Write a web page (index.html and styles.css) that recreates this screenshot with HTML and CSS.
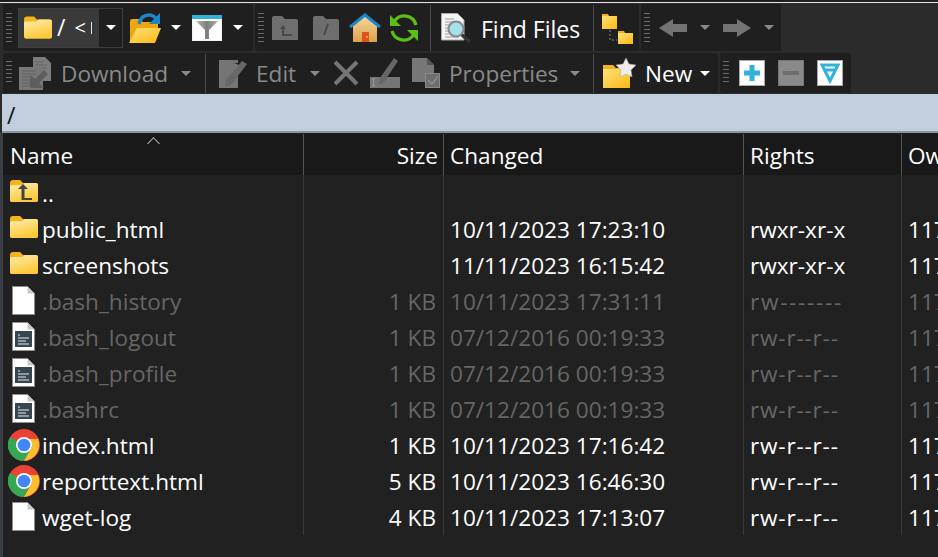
FILE: index.html
```html
<!DOCTYPE html>
<html lang="en">
<head>
<meta charset="utf-8">
<title>Files</title>
<link rel="stylesheet" href="styles.css">
</head>
<body>
<svg class="defs" aria-hidden="true">
<defs>
<linearGradient id="gy" x1="0" y1="0" x2="0.4" y2="1"><stop offset="0" stop-color="#ffeeb0"/><stop offset="1" stop-color="#fdc93a"/></linearGradient>
<linearGradient id="gy2" x1="0" y1="0" x2="1" y2="1"><stop offset="0" stop-color="#ffe27a"/><stop offset="1" stop-color="#fdb812"/></linearGradient>
<linearGradient id="gh" x1="0" y1="0" x2="0" y2="1"><stop offset="0" stop-color="#f5d9a0"/><stop offset="1" stop-color="#dba24c"/></linearGradient>
<linearGradient id="gf" x1="0" y1="0" x2="1" y2="0"><stop offset="0" stop-color="#b8b8b8"/><stop offset=".5" stop-color="#7d7d7d"/><stop offset="1" stop-color="#b0b0b0"/></linearGradient>
<symbol id="folder" viewBox="0 0 28 22"><path d="M0 3q0-3 3-3h7l3 3h12q3 0 3 2v15q0 2-2 2H2q-2 0-2-2z" fill="#f6b41c"/><path d="M0 7q0-2 2-2h10l3-2h11q2 0 2 2v15q0 2-2 2H2q-2 0-2-2z" fill="url(#gy)"/></symbol>
<symbol id="file" viewBox="0 0 23 29"><path d="M.5.5h15l7 7v21H.5z" fill="#fff" stroke="#8f8f8f"/><path d="M15.5.5v7h7z" fill="#c9c9c9"/></symbol>
<symbol id="script" viewBox="0 0 23 29"><path d="M.5.5h15l7 7v21H.5z" fill="#fff" stroke="#8f8f8f"/><path d="M15.5.5v7h7z" fill="#c9c9c9"/><rect x="3" y="9" width="17" height="16" fill="#36474f"/><path d="M6 13h2M6 16h11M6 19h8M6 22h11" stroke="#e8eef0" stroke-width="1.2"/></symbol>
<symbol id="chrome" viewBox="0 0 32 32"><circle cx="16" cy="16" r="16" fill="#ea4335"/><path d="M16 16L2.1 8A16 16 0 0 0 16 32l8-13.900z" fill="#34a853"/><path d="M16 10h14a16 16 0 0 1-14 22l8-13.900z" fill="#fbc02d"/><circle cx="16" cy="16" r="8" fill="#fff"/><circle cx="16" cy="16" r="6.300" fill="#4285f4"/></symbol>
</defs>
</svg>
<div class="app">
  <div class="topline"></div>
  <div class="tbrow first">
    <div class="tb tb-a">
      <span class="grip"></span>
      <div class="combo">
        <div class="combo-field">
          <svg class="ic-folder-lg"><use href="#folder"/></svg>
          <span class="combo-text">/</span>
          <span class="combo-text2">&lt;</span><span class="combo-bar"></span>
        </div>
        <span class="caret"></span>
      </div>
      <svg class="i-open" viewBox="0 0 32 30"><path d="M1 8q0-2 2-2h8l3 3h13q2 0 2 2v4L7 30H1z" fill="#eea80f"/><path d="M8 15h24l-6 15H0z" fill="url(#gy2)"/><path d="M10 11Q12 2 20 2q5 0 8 5" fill="none" stroke="#1c86c8" stroke-width="3.500"/><path d="M31 0v11H20z" fill="#1c86c8"/></svg>
      <span class="caret c-open"></span>
      <svg class="i-filter" viewBox="0 0 30 26"><rect width="30" height="26" fill="#f2f2f2"/><rect x="1" y="1" width="28" height="24" fill="#fff"/><rect width="30" height="4" fill="#2fb2dc"/><path d="M4 6h22l-9 9v9h-4v-9z" fill="url(#gf)"/></svg>
      <span class="caret c-filter"></span>
    </div>
    <div class="tb tb-b">
      <span class="grip"></span>
      <svg class="i-parent" viewBox="0 0 26 24"><path d="M0 2q0-2 2-2h8l3 3h11q2 0 2 2v19H0z" fill="#6e6e6e"/><path d="M8 13l3-4 3 4h-2v5h8v2H10v-7z" fill="#4a4a4a"/></svg>
      <svg class="i-root" viewBox="0 0 26 24"><path d="M0 2q0-2 2-2h8l3 3h11q2 0 2 2v19H0z" fill="#6e6e6e"/><path d="M11 19l4-11" stroke="#4a4a4a" stroke-width="2"/></svg>
      <svg class="i-home" viewBox="0 0 32 29"><path d="M4 12L16 2l12 10v17H4z" fill="url(#gh)"/><path d="M1 14L16 2l15 12" fill="none" stroke="#1c86c8" stroke-width="3"/><rect x="13" y="19" width="7" height="10" fill="#df5518"/><rect x="17.500" y="23" width="1" height="1.500" fill="#fff"/></svg>
      <svg class="i-refresh" viewBox="0 0 30 28"><path d="M5 8A12 12 0 0 1 27 11M25 20A12 12 0 0 1 3 17" fill="none" stroke="#5cbf15" stroke-width="3.200"/><path d="M1 1v11h11zM29 27V16H18z" fill="#5cbf15"/></svg>
      <span class="sep"></span>
      <svg class="i-find" viewBox="0 0 30 30"><path d="M.5.500h16l6.500 6.500v20H.5z" fill="#f4f4f4" stroke="#aaa"/><path d="M4 6h9M4 9h15M4 12h4M4 15h4M4 18h4M4 21h4M4 24h14" stroke="#9a9a9a"/><path d="M20 21l9 8" stroke="#333" stroke-width="3.500"/><circle cx="15" cy="16" r="7.500" fill="#a6e0ec" stroke="#888" stroke-width="2"/></svg>
      <span class="label on l-find">Find Files</span>
      <span class="sep s-tree"></span>
      <svg class="i-tree" viewBox="0 0 31 32"><path d="M0 2h6l1 2h8v13H0z" fill="#f6b41c"/><rect y="4" width="15" height="13" fill="url(#gy2)"/><path d="M8 18v10h7" fill="none" stroke="#666" stroke-width="1.500" stroke-dasharray="2 2"/><path d="M16 19h6l1 2h8v11H16z" fill="#f6b41c"/><rect x="16" y="21" width="15" height="11" fill="url(#gy2)"/></svg>
    </div>
    <div class="tb tb-c">
      <span class="grip"></span>
      <svg class="i-back" viewBox="0 0 28 18"><path d="M0 9L14 0v5h14v8H14v5z" fill="#737373"/></svg>
      <span class="caret dim c-back"></span>
      <svg class="i-fwd" viewBox="0 0 28 18"><path d="M28 9L14 0v5H0v8h14v5z" fill="#737373"/></svg>
      <span class="caret dim c-fwd"></span>
    </div>
  </div>
  <div class="tbrow second">
    <div class="tb tb-d">
      <span class="grip"></span>
      <svg class="i-dl" viewBox="0 0 32 33"><path d="M14 0h12l6 6v18H14z" fill="#7c7c7c"/><path d="M16 5h8M16 8h12M16 11h12" stroke="#666"/><path d="M0 10h22l2 4v19H0z" fill="#777"/><path d="M3 14h14M3 17h14M3 20h10M3 23h10M3 26h10M3 29h14" stroke="#626262"/><path d="M25 13l4 4-9 9 5 5H11V18l5 4z" fill="#5e5e5e"/></svg>
      <span class="label off l-dl">Download</span>
      <span class="caret dim c-dl"></span>
      <span class="sep s-dl"></span>
      <svg class="i-edit" viewBox="0 0 28 29"><path d="M0 1h16l-1 3 5 2L9 24l9-7 1-3v15H0z" fill="#757575"/><path d="M0 1h19v3H0z" fill="#757575"/><path d="M23 2l5 3-16 21-6 2 1-7z" fill="#686868"/></svg>
      <span class="label off l-edit">Edit</span>
      <span class="caret dim c-edit"></span>
      <svg class="i-del" viewBox="0 0 26 26"><path d="M2 2l22 22M24 2L2 24" stroke="#757575" stroke-width="4"/></svg>
      <svg class="i-ren" viewBox="0 0 30 30"><rect y="19" width="30" height="11" fill="#757575"/><path d="M2 21h3M2 28h3M3.500 21v7" stroke="#999" fill="none"/><path d="M24 0l4 3-14 21-5 3 1-7z" fill="#666"/></svg>
      <svg class="i-props" viewBox="0 0 28 30"><path d="M0 0h15l7 7v17H0z" fill="#777"/><path d="M15 0v7h7z" fill="#555"/><rect x="13.500" y="15.500" width="14" height="14" fill="#6e6e6e" stroke="#8a8a8a"/><path d="M16 22l4 4 6-8" fill="none" stroke="#8e8e8e" stroke-width="1.500"/></svg>
      <span class="label off l-props">Properties</span>
      <span class="caret dim c-props"></span>
      <span class="sep s-props"></span>
      <svg class="i-new" viewBox="0 0 33 30"><path d="M0 7h10l3 3h14v20H0z" fill="#f6b41c"/><rect y="11" width="27" height="19" fill="url(#gy2)"/><path d="M23 0l3 6 7 1-5 5 1 7-6-3-6 3 1-7-5-5 7-1z" fill="#eee" stroke="#aaa" stroke-width=".5"/></svg>
      <span class="label on l-new">New</span>
      <span class="caret c-new"></span>
    </div>
    <div class="tb tb-e">
      <span class="grip"></span>
      <svg class="i-box" viewBox="0 0 26 26"><rect x=".5" y=".5" width="25" height="25" fill="#fff" stroke="#aaa"/><path d="M13 5v16M5 13h16" stroke="#2fb2dc" stroke-width="5"/></svg>
      <svg class="i-box b2" viewBox="0 0 26 26"><rect x=".5" y=".5" width="25" height="25" fill="#8a8a8a" stroke="#777"/><path d="M5 13h16" stroke="#6e6e6e" stroke-width="4"/></svg>
      <svg class="i-box b2" viewBox="0 0 26 26"><rect x=".5" y=".5" width="25" height="25" fill="#fff" stroke="#aaa"/><path d="M5 5h16l-8 16z" fill="none" stroke="#2fb2dc" stroke-width="3"/><path d="M8 10h10" stroke="#2fb2dc" stroke-width="3"/></svg>
    </div>
  </div>
  <div class="pathbar">/</div>
  <div class="panel">
    <div class="sortmark"></div>
    <div class="row head">
      <div class="cell c1">Name</div><div class="cell c2">Size</div><div class="cell c3">Changed</div><div class="cell c4">Rights</div><div class="cell c5">Owner</div>
    </div>
    <div class="list">
      <div class="row"><div class="cell c1"><span class="ic"><svg class="i-up" viewBox="0 0 28 22"><use href="#folder"/><path d="M13 4l5 5h-3.500v9H22v2H11.500V9H8z" fill="#444"/></svg></span>..</div><div class="cell c2"></div><div class="cell c3"></div><div class="cell c4"></div><div class="cell c5"></div></div>
      <div class="row"><div class="cell c1"><span class="ic"><svg class="i-fold"><use href="#folder"/></svg></span>public_html</div><div class="cell c2"></div><div class="cell c3">10/11/2023 17:23:10</div><div class="cell c4">rwxr-xr-x</div><div class="cell c5">117</div></div>
      <div class="row"><div class="cell c1"><span class="ic"><svg class="i-fold"><use href="#folder"/></svg></span>screenshots</div><div class="cell c2"></div><div class="cell c3">11/11/2023 16:15:42</div><div class="cell c4">rwxr-xr-x</div><div class="cell c5">117</div></div>
      <div class="row hidden"><div class="cell c1"><span class="ic"><svg class="i-file"><use href="#file"/></svg></span>.bash_history</div><div class="cell c2">1 KB</div><div class="cell c3">10/11/2023 17:31:11</div><div class="cell c4 dash-many">rw-------</div><div class="cell c5">117</div></div>
      <div class="row hidden"><div class="cell c1"><span class="ic"><svg class="i-file"><use href="#script"/></svg></span>.bash_logout</div><div class="cell c2">1 KB</div><div class="cell c3">07/12/2016 00:19:33</div><div class="cell c4 dash">rw-r--r--</div><div class="cell c5">117</div></div>
      <div class="row hidden"><div class="cell c1"><span class="ic"><svg class="i-file"><use href="#script"/></svg></span>.bash_profile</div><div class="cell c2">1 KB</div><div class="cell c3">07/12/2016 00:19:33</div><div class="cell c4 dash">rw-r--r--</div><div class="cell c5">117</div></div>
      <div class="row hidden"><div class="cell c1"><span class="ic"><svg class="i-file"><use href="#script"/></svg></span>.bashrc</div><div class="cell c2">1 KB</div><div class="cell c3">07/12/2016 00:19:33</div><div class="cell c4 dash">rw-r--r--</div><div class="cell c5">117</div></div>
      <div class="row"><div class="cell c1"><span class="ic"><svg class="i-chrome"><use href="#chrome"/></svg></span>index.html</div><div class="cell c2">1 KB</div><div class="cell c3">10/11/2023 17:16:42</div><div class="cell c4 dash">rw-r--r--</div><div class="cell c5">117</div></div>
      <div class="row"><div class="cell c1"><span class="ic"><svg class="i-chrome"><use href="#chrome"/></svg></span>reporttext.html</div><div class="cell c2">5 KB</div><div class="cell c3">10/11/2023 16:46:30</div><div class="cell c4 dash">rw-r--r--</div><div class="cell c5">117</div></div>
      <div class="row"><div class="cell c1"><span class="ic"><svg class="i-file"><use href="#file"/></svg></span>wget-log</div><div class="cell c2">4 KB</div><div class="cell c3">10/11/2023 17:13:07</div><div class="cell c4 dash">rw-r--r--</div><div class="cell c5">117</div></div>
    </div>
  </div>
</div>
</body>
</html>
```
FILE: styles.css
```css
* { box-sizing: border-box; }
html, body { margin: 0; height: 100%; overflow: hidden; background: #2b2b2b; }
body { font-family: "Open Sans", "Noto Sans", sans-serif; font-size: 22.6px; color: #fff; }
.defs { display: block; width: 0; height: 0; }
.app { width: 938px; height: 557px; display: flex; flex-direction: column; overflow: hidden; }
svg { display: block; flex: none; }

.topline { height: 4px; border-top: 2px solid #1f1f1f; border-bottom: 1px solid #2b2b2b; background: #e6e6e6; flex: none; }
.tbrow { display: flex; gap: 2px; padding-left: 3px; flex: none; align-items: stretch; }
.first { height: 47px; }
.second { height: 40px; margin-top: 2px; }
.tb { display: flex; align-items: center; background: #1f1f1f; border-radius: 3px; padding-left: 3px; }
.tb-a { width: 250px; }
.tb-b { width: 384px; }
.tb-c { width: 140px; }
.tb-d { width: 715px; }
.tb-e { width: 131px; }

.grip { width: 6px; height: 30px; flex: none; background: repeating-linear-gradient(to bottom, #6a6a6a 0 1px, transparent 1px 4px); }
.second .grip { height: 24px; }

.combo { display: flex; align-items: center; width: 105px; height: 40px; margin-left: 6px; border: 1px solid #3f3f3f; }
.combo-field { display: flex; align-items: center; width: 80px; height: 100%; background: #3a3a3a; padding-left: 5px; }
.ic-folder-lg { width: 28px; height: 23px; }
.combo-text { margin-left: 5px; font-size: 23px; line-height: 1; }
.combo-text2 { margin-left: 9px; font-size: 20px; }
.combo-bar { width: 1px; height: 12px; background: #cfe4f5; margin-left: 5px; }

.caret { width: 0; height: 0; flex: none; border: 5px solid transparent; border-top-color: #fff; border-bottom: 0; }
.caret.dim { border-top-color: #8a8a8a; }
.combo .caret { margin-left: 7px; }
.i-open { width: 32px; height: 30px; margin-left: 6px; }
.c-open { margin-left: 10px; }
.i-filter { width: 30px; height: 26px; margin-left: 11px; }
.c-filter { margin-left: 11px; }

.i-parent { width: 26px; height: 24px; margin-left: 8px; }
.i-root { width: 26px; height: 24px; margin-left: 15px; }
.i-home { width: 32px; height: 29px; margin-left: 10px; }
.i-refresh { width: 30px; height: 28px; margin-left: 8px; }
.sep { width: 1px; align-self: stretch; background: #4a4a4a; flex: none; margin-top: 1px; }
.tb-b > .sep { margin-left: 11px; }
.i-find { width: 30px; height: 30px; margin-left: 10px; }
.label { line-height: 1; white-space: nowrap; flex: none; padding-top: 3px; }
.on { color: #fff; }
.off { color: #8a8a8a; }
.l-find { margin-left: 10px; width: 101px; font-size: 23px; }
.tb-b > .s-tree { margin-left: 11px; }
.i-tree { width: 31px; height: 32px; margin-left: 8px; }

.i-back { width: 28px; height: 18px; margin-left: 9px; }
.c-back { margin-left: 13px; }
.i-fwd { width: 28px; height: 18px; margin-left: 13px; }
.c-fwd { margin-left: 13px; }

.i-dl { width: 32px; height: 33px; margin-left: 7px; }
.l-dl { margin-left: 10px; width: 107px; }
.c-dl { margin-left: 13px; }
.tb-d > .s-dl { margin-left: 14px; }
.i-edit { width: 28px; height: 29px; margin-left: 13px; }
.l-edit { margin-left: 9px; width: 41px; }
.c-edit { margin-left: 13px; }
.i-del { width: 26px; height: 26px; margin-left: 13px; }
.i-ren { width: 30px; height: 30px; margin-left: 11px; }
.i-props { width: 28px; height: 30px; margin-left: 12px; }
.l-props { margin-left: 9px; width: 108px; }
.c-props { margin-left: 13px; }
.tb-d > .s-props { margin-left: 13px; }
.i-new { width: 33px; height: 30px; margin-left: 9px; }
.l-new { margin-left: 9px; width: 49px; }
.c-new { margin-left: 6px; }

.i-box { width: 26px; height: 26px; margin-left: 10px; }
.b2 { margin-left: 13px; }

.pathbar { height: 39px; margin-top: 1px; margin-left: 2px; flex: none; background: #c0cedd; color: #111; font-size: 23px; line-height: 42px; padding-left: 5px; border-bottom: 2px solid #8f949a; }

.panel { position: relative; flex: 1; min-height: 0; background: #212121; border-left: 3px solid #3a3f46; }
.sortmark { position: absolute; left: 146px; top: 6px; width: 9px; height: 9px; border-left: 1px solid #b5b5b5; border-top: 1px solid #b5b5b5; transform: rotate(45deg); }
.row { display: grid; grid-template-columns: 301px 140px 300px 158px 100px; height: 36px; width: 1000px; align-items: stretch; }
.head { height: 41px; background: #191919; margin-top: 1px; }
.cell { display: flex; align-items: center; white-space: nowrap; overflow: hidden; border-right: 1px solid #3a3a3a; padding-left: 6px; }
.head .cell { border-right-color: #555; padding-top: 1px; }
.row .c1 { padding-left: 0; }
.head .c1 { padding-left: 7px; }
.c2 { justify-content: flex-end; padding-right: 7px; }
.head .c2 { padding-right: 5px; }
.row .c5 { border-right: 0; }
.hidden { color: #666; }
.dash { letter-spacing: .8px; }
.dash-many { letter-spacing: 1.7px; }
.ic { width: 39px; display: flex; align-items: center; justify-content: center; flex: none; height: 100%; padding-left: 2px; }
.i-fold, .i-up { width: 28px; height: 22px; margin-top: -4px; }
.i-file { width: 23px; height: 29px; margin-top: -1px; }
.i-chrome { width: 32px; height: 32px; margin-top: -1px; }
```
